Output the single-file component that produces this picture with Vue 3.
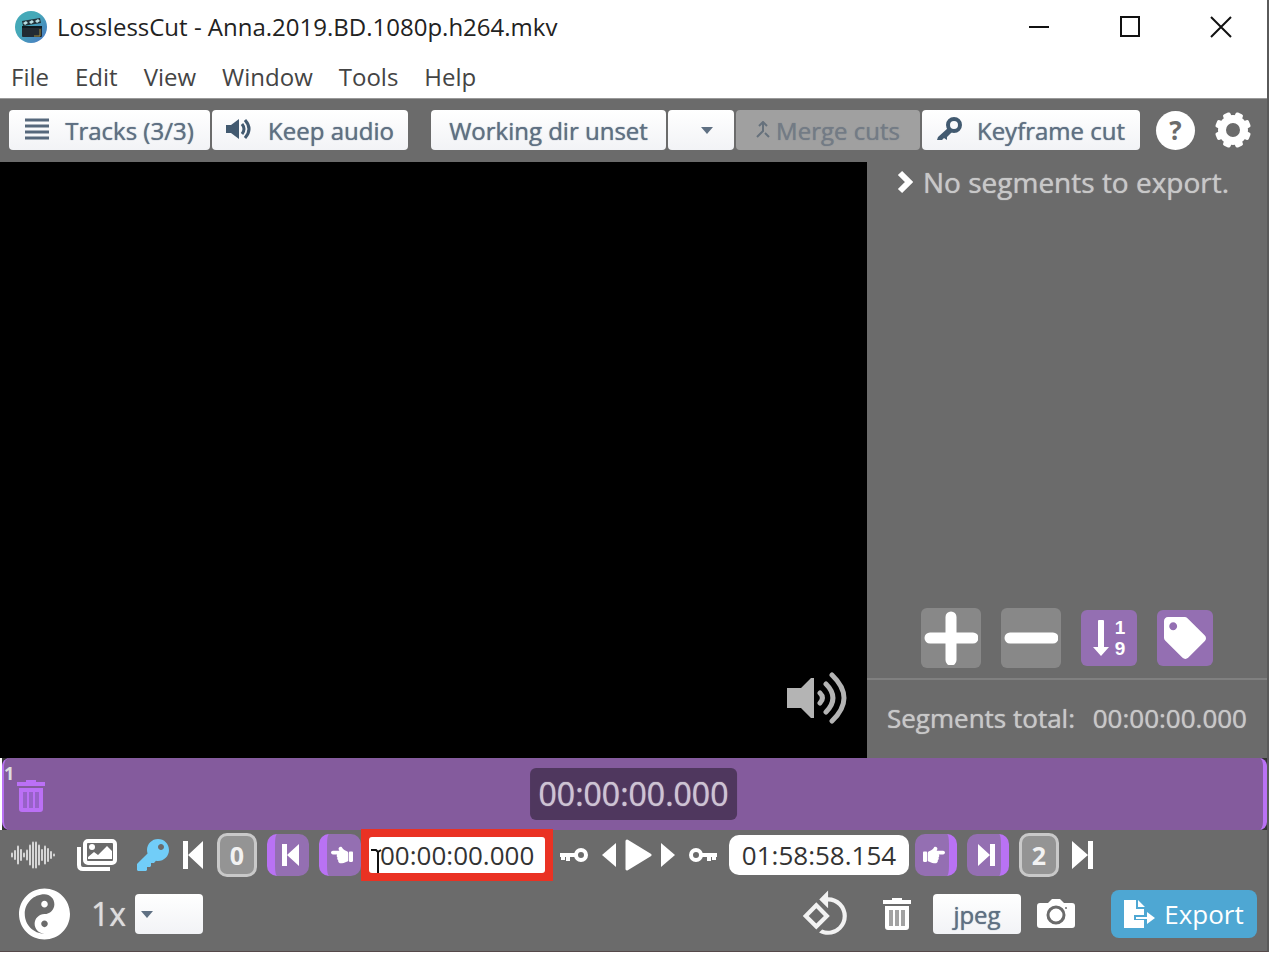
<script setup>
import { ref } from 'vue'

const menus = ['File', 'Edit', 'View', 'Window', 'Tools', 'Help']
const cutStart = ref('00:00:00.000')
const cutEnd = ref('01:58:58.154')
const outputDir = ref('')
const speed = ref('')

const waveBars = [
  [1, 5], [4, 10], [7, 19], [10, 12], [13, 5], [16, 11], [19, 21], [22, 27],
  [25, 27], [28, 21], [31, 12], [34, 19], [37, 14], [40, 8], [43, 3]
]
const teeth = [0, 45, 90, 135, 180, 225, 270, 315]
const hand =
  'M512 199.652c0 23.625-20.65 43.826-44.8 43.826h-99.851c16.34 17.048 18.346 49.766-6.299 70.944 14.288 22.829 2.147 53.017-16.45 62.315C353.574 425.878 322.654 448 272 448c-2.746 0-13.276-.203-16-.195-61.971.168-76.894-31.065-123.731-38.315C120.596 407.683 112 397.599 112 385.786V214.261l.002-.001c.011-18.366 10.607-35.889 28.464-43.845 28.886-12.994 95.413-49.038 107.534-77.323 7.797-18.194 21.384-29.084 40-29.092 34.222-.014 57.752 35.098 44.119 66.908-3.583 8.359-8.312 16.67-14.153 24.918H467.2c23.45 0 44.8 20.543 44.8 43.826zM96 200v192c0 13.255-10.745 24-24 24H24c-13.255 0-24-10.745-24-24V200c0-13.255 10.745-24 24-24h48c13.255 0 24 10.745 24 24z'
</script>

<template>
  <div class="desktop">
    <div class="window">
      <header class="titlebar">
        <svg class="logo" width="32" height="32" viewBox="0 0 32 32" aria-hidden="true">
          <defs>
            <linearGradient id="logo-fill" x1="0" y1="0" x2="1" y2="1">
              <stop offset="0.4" stop-color="#45a9b8" />
              <stop offset="1" stop-color="#4a74c4" />
            </linearGradient>
          </defs>
          <circle cx="16" cy="16" r="16" fill="url(#logo-fill)" />
          <rect x="7" y="15" width="20" height="11" rx="1" fill="#222b33" />
          <path d="M7 10l18-3 1 5-18 3z" fill="#22323a" />
          <path d="M8 12l3-2 2 2-3 2zM14 11l3-2 2 2-3 2zM20 10l3-2 2 2-3 2z" fill="#b9dfe4" />
          <path d="M7 16h20" stroke="#0f1a20" stroke-width="2" />
          <path d="M25 18v7h-6" stroke="#a08c3c" stroke-width="1" fill="none" />
        </svg>
        <h1>LosslessCut - Anna.2019.BD.1080p.h264.mkv</h1>
        <div class="caption">
          <button aria-label="Minimize">
            <svg width="22" height="22" viewBox="0 0 22 22"><path d="M1 11h20" /></svg>
          </button>
          <button aria-label="Maximize">
            <svg width="22" height="22" viewBox="0 0 22 22"><rect x="2" y="1" width="18" height="19" /></svg>
          </button>
          <button aria-label="Close">
            <svg width="22" height="22" viewBox="0 0 22 22"><path d="M1 1l20 20M21 1L1 21" /></svg>
          </button>
        </div>
      </header>

      <nav class="menubar">
        <button v-for="m in menus" :key="m">{{ m }}</button>
      </nav>

      <div class="topbar">
        <div class="joined">
          <button class="light tracks">
            <svg width="24" height="24" viewBox="0 0 24 24"><path d="M0 2h24M0 8h24M0 14h24M0 20h24" stroke="#56687c" stroke-width="3" /></svg>
            Tracks (3/3)
          </button>
          <button class="light audio">
            <svg width="26" height="22" viewBox="0 0 26 22">
              <path d="M0 6h5l8-6v20l-8-6H0z" fill="#425a70" />
              <path d="M16 5q4 5 0 10M19 1q8 9 0 18" fill="none" stroke="#425a70" stroke-width="3" />
            </svg>
            Keep audio
          </button>
        </div>
        <div class="joined stretch">
          <button class="light workdir">Working dir unset</button>
          <label class="picker dir">
            <select v-model="outputDir" class="light" aria-label="Working directory"><option value=""></option></select>
            <svg width="14" height="9" viewBox="0 0 14 9"><path d="M1 1h12L7 8z" /></svg>
          </label>
          <button class="light merge" disabled>
            <svg width="14" height="18" viewBox="0 0 14 18"><path d="M7 2v8L1 16M9 12l4 4M3 5l4-4 4 4" fill="none" stroke="#66717c" stroke-width="2" /></svg>
            Merge cuts
          </button>
          <button class="light keyframe">
            <svg width="26" height="26" viewBox="0 0 26 26">
              <circle cx="17" cy="8" r="6" fill="none" stroke="#425a70" stroke-width="4" />
              <path d="M11 11l4 4-5 5v3l-3-2-2 2H0l1-3z" fill="#425a70" />
            </svg>
            Keyframe cut
          </button>
        </div>
        <button class="help" aria-label="Help">?</button>
        <button class="bare gear" aria-label="Settings">
          <svg width="38" height="38" viewBox="0 0 38 38">
            <circle cx="19" cy="19" r="11" fill="none" stroke="#fff" stroke-width="8" />
            <rect v-for="t in teeth" :key="t" x="15" y="1" width="8" height="8" rx="2" fill="#fff" :transform="`rotate(${t + 22.5} 19 19)`" />
          </svg>
        </button>
      </div>

      <main class="stage">
        <section class="player" aria-label="Video">
          <button class="bare" aria-label="Volume">
            <svg width="62" height="52" viewBox="0 0 62 52">
              <path d="M1 16h14l10-10h3v40h-3L15 36H1z" fill="#b4b4b4" />
              <path d="M34 21q5 5 0 10M40 12q14 14 0 28M46 3q24 23 0 46" fill="none" stroke="#b4b4b4" stroke-width="5" stroke-linecap="round" />
            </svg>
          </button>
        </section>
        <aside class="sidebar">
          <div class="segments">
            <button class="bare" aria-label="Collapse segments">
              <svg width="16" height="24" viewBox="0 0 16 24"><path d="M3 3l9 9-9 9" fill="none" stroke="#fff" stroke-width="6" /></svg>
            </button>
            <span>No segments to export.</span>
          </div>
          <div class="segment-tools">
            <button class="tool big" aria-label="Add segment">
              <svg width="54" height="54" viewBox="0 0 54 54"><path d="M27 6v43M6 27h43" stroke="#fff" stroke-width="11" stroke-linecap="round" /></svg>
            </button>
            <button class="tool big" aria-label="Remove segment">
              <svg width="54" height="54" viewBox="0 0 54 54"><path d="M6 27h43" stroke="#fff" stroke-width="11" stroke-linecap="round" /></svg>
            </button>
            <button class="tool purple" aria-label="Change segment order">
              <svg width="16" height="36" viewBox="0 0 16 36"><path d="M5 1q0-1 1-1h4q1 0 1 1v26h5l-8 9-8-9h5z" fill="#fff" /></svg>
              <span class="digits"><b>1</b><b>9</b></span>
            </button>
            <button class="tool purple" aria-label="Label segment">
              <svg width="42" height="42" viewBox="0 0 512 512"><path fill="#fff" d="M0 252.118V48C0 21.49 21.49 0 48 0h204.118a48 48 0 0 1 33.941 14.059l211.882 211.882c18.745 18.745 18.745 49.137 0 67.882L293.823 497.941c-18.745 18.745-49.137 18.745-67.882 0L14.059 286.059A48 48 0 0 1 0 252.118zM112 64c-26.51 0-48 21.49-48 48s21.49 48 48 48 48-21.49 48-48-21.49-48-48-48z" /></svg>
            </button>
          </div>
          <div class="total"><span>Segments total:</span><span>00:00:00.000</span></div>
        </aside>
      </main>

      <section class="timeline" aria-label="Timeline">
        <div class="segment">
          <span class="number">1</span>
          <button class="bare" aria-label="Discard segment">
            <svg width="28" height="32" viewBox="0 0 28 32">
              <path fill="#bb70f6" d="M9 0h10v2h9v4H0V2h9zM2 8h24v21q0 3-3 3H5q-3 0-3-3z" />
              <path d="M8 12v16M14 12v16M20 12v16" stroke="#9862c8" stroke-width="4" />
            </svg>
          </button>
          <output class="now">00:00:00.000</output>
        </div>
      </section>

      <section class="controls">
        <div class="group wide">
          <button class="bare wave" aria-label="Show waveform">
            <svg width="44" height="30" viewBox="0 0 44 30">
              <rect v-for="b in waveBars" :key="b[0]" :x="b[0] - 1" :y="15 - b[1] / 2" width="2" :height="b[1]" rx="1" fill="#d6d6d6" />
            </svg>
          </button>
          <button class="bare" aria-label="Show thumbnails">
            <svg width="40" height="34" viewBox="0 0 40 34">
              <path d="M2 9v18q0 4 4 4h27" fill="none" stroke="#fff" stroke-width="4" />
              <rect x="8" y="3" width="30" height="22" rx="3" fill="none" stroke="#fff" stroke-width="4" />
              <circle cx="15" cy="9" r="3" fill="#fff" />
              <path d="M11 21v-2l6-5 4 3 9-9 5 5v8z" fill="#fff" />
            </svg>
          </button>
          <button class="bare" aria-label="Seek to keyframes">
            <svg width="32" height="32" viewBox="0 0 512 512"><path fill="#71cdf8" d="M512 176.001C512 273.203 433.202 352 336 352c-11.22 0-22.19-1.062-32.827-3.069l-24.012 27.014A23.999 23.999 0 0 1 261.223 384H224v40c0 13.255-10.745 24-24 24h-40v40c0 13.255-10.745 24-24 24H24c-13.255 0-24-10.745-24-24v-78.059c0-6.365 2.529-12.47 7.029-16.971l161.802-161.802C163.108 213.814 160 195.271 160 176 160 78.798 238.797.001 335.999 0 433.488-.001 512 78.511 512 176.001zM336 128c0 26.51 21.49 48 48 48s48-21.49 48-48-21.49-48-48-48-48 21.49-48 48z" /></svg>
          </button>
        </div>
        <div class="group mid">
          <button class="bare" aria-label="Jump to start">
            <svg width="20" height="28" viewBox="0 0 20 28"><path d="M0 0h5v28H0zM20 0v28L5 14z" fill="#fff" /></svg>
          </button>
          <div class="group">
            <button class="num">0</button>
            <button class="cut start" aria-label="Jump to cut start">
              <svg width="17" height="22" viewBox="0 0 17 22"><path d="M0 0h5v22H0zM17 0v22L5 11z" fill="#fff" /></svg>
            </button>
            <button class="cut start" aria-label="Set cut start">
              <svg width="22" height="22" viewBox="0 0 512 512"><path fill="#fff" transform="translate(512 0) scale(-1 1)" :d="hand" /></svg>
            </button>
          </div>
        </div>
        <div class="marked">
          <input v-model="cutStart" class="time" aria-label="Cut start" />
          <svg class="ibeam" width="12" height="26" viewBox="0 0 12 26" aria-hidden="true"><path d="M1 2h5l2 2 3-2M8 3v22" fill="none" stroke="#111" stroke-width="2" /></svg>
        </div>
        <div class="group mid transport">
          <button class="bare" aria-label="Previous keyframe">
            <svg width="29" height="16" viewBox="0 0 29 16"><circle cx="22" cy="8" r="5" fill="none" stroke="#fff" stroke-width="4" /><path d="M17 8H1M4 8v5M9 8v6" fill="none" stroke="#fff" stroke-width="4" /></svg>
          </button>
          <div class="group snug">
            <button class="bare" aria-label="Previous frame">
              <svg width="14" height="24" viewBox="0 0 14 24"><path d="M14 0v24L0 12z" fill="#fff" /></svg>
            </button>
            <button class="bare" aria-label="Play">
              <svg width="27" height="32" viewBox="0 0 27 32"><path d="M2 2l23 14L2 30z" fill="#fff" stroke="#fff" stroke-width="3" stroke-linejoin="round" /></svg>
            </button>
            <button class="bare" aria-label="Next frame">
              <svg width="14" height="24" viewBox="0 0 14 24"><path d="M0 0v24l14-12z" fill="#fff" /></svg>
            </button>
          </div>
          <button class="bare" aria-label="Next keyframe">
            <svg width="29" height="16" viewBox="0 0 29 16"><circle cx="7" cy="8" r="5" fill="none" stroke="#fff" stroke-width="4" /><path d="M12 8h16M25 8v5M20 8v6" fill="none" stroke="#fff" stroke-width="4" /></svg>
          </button>
        </div>
        <div class="group">
          <input v-model="cutEnd" class="time end" aria-label="Cut end" />
          <button class="cut stop first" aria-label="Set cut end">
            <svg width="22" height="22" viewBox="0 0 512 512"><path fill="#fff" :d="hand" /></svg>
          </button>
          <button class="cut stop" aria-label="Jump to cut end">
            <svg width="17" height="22" viewBox="0 0 17 22"><path d="M12 0h5v22h-5zM0 0v22l12-11z" fill="#fff" /></svg>
          </button>
          <button class="num">2</button>
          <button class="bare last" aria-label="Jump to end">
            <svg width="21" height="28" viewBox="0 0 21 28"><path d="M16 0h5v28h-5zM0 0v28l16-14z" fill="#fff" /></svg>
          </button>
        </div>
      </section>

      <footer class="bottom">
        <button class="bare" aria-label="Toggle mode">
          <svg width="51" height="52" viewBox="0 8 496 496"><path fill="#fff" d="M248 8C111.03 8 0 119.03 0 256s111.03 248 248 248 248-111.03 248-248S384.97 8 248 8zm0 376c-17.67 0-32-14.33-32-32s14.33-32 32-32 32 14.33 32 32-14.33 32-32 32zm0-128c-53.02 0-96 42.98-96 96s42.98 96 96 96c-106.04 0-192-85.96-192-192S141.96 64 248 64c53.02 0 96 42.98 96 96s-42.98 96-96 96zm0-128c-17.67 0-32 14.33-32 32s14.33 32 32 32 32-14.33 32-32-14.33-32-32-32z" /></svg>
        </button>
        <label class="speed" for="speed">1x</label>
        <div class="picker rate">
          <select id="speed" v-model="speed" class="light"><option value=""></option></select>
          <svg width="14" height="9" viewBox="0 0 14 9"><path d="M1 1h12L7 8z" /></svg>
        </div>
        <div class="actions">
          <button class="bare" aria-label="Rotate">
            <svg width="50" height="50" viewBox="0 0 24 24"><path fill="#f2f2f2" d="M7.34 6.41L.86 12.9l6.49 6.48 6.49-6.48-6.5-6.49zM3.69 12.9l3.66-3.66L11 12.9l-3.66 3.66-3.65-3.66zm15.67-6.26A8.95 8.95 0 0 0 13 4V.76L8.76 5 13 9.24V6c1.79 0 3.58.68 4.95 2.05a7.007 7.007 0 0 1 0 9.9 6.973 6.973 0 0 1-7.79 1.44l-1.49 1.49C10.02 21.62 11.51 22 13 22c2.3 0 4.61-.88 6.36-2.64a8.98 8.98 0 0 0 0-12.72z" /></svg>
          </button>
          <button class="bare trash" aria-label="Delete source">
            <svg width="28" height="32" viewBox="0 0 28 32">
              <path fill="#fff" d="M9 0h10v2h9v4H0V2h9zM2 8h24v21q0 3-3 3H5q-3 0-3-3z" />
              <path d="M8 12v16M14 12v16M20 12v16" stroke="#a2a2a2" stroke-width="4" />
            </svg>
          </button>
          <button class="light format">jpeg</button>
          <button class="bare" aria-label="Capture frame">
            <svg width="38" height="30" viewBox="0 0 38 30">
              <path fill="#fff" d="M3 4h8l4-4h8l4 4h8q3 0 3 3v19q0 3-3 3H3q-3 0-3-3V7q0-3 3-3z" />
              <circle cx="19" cy="16" r="8" fill="none" stroke="#6b6b6b" stroke-width="3" />
              <circle cx="29" cy="9" r="1" fill="#6b6b6b" />
            </svg>
          </button>
          <button class="export">
            <svg width="31" height="28" viewBox="0 0 31 28">
              <path fill="#fff" d="M0 0h12v9h8v6H10v5h10v8H0zM14 0l7 7h-7zM12 17h11v-5l8 6-8 6v-5H12z" />
            </svg>
            Export
          </button>
        </div>
      </footer>
    </div>
  </div>
</template>

<style>
body { background: #fff; }
</style>

<style scoped>
.desktop {
  box-sizing: border-box;
  height: 100vh;
  padding: 0 3px 6px 0;
  font-family: "Open Sans", "Noto Sans", sans-serif;
}
.window {
  display: flex;
  flex-direction: column;
  height: 100%;
  box-sizing: border-box;
  border-right: 2px solid #5a5a5a;
  border-bottom: 1px solid #55494a;
  background: #6b6b6b;
}
button, input, select { font: inherit; margin: 0; }
button {
  display: flex;
  align-items: center;
  justify-content: center;
  border: 0;
  padding: 0;
  background: none;
}
svg { display: block; flex: none; }

.titlebar {
  display: flex;
  align-items: center;
  height: 53px;
  padding: 0 1px 0 15px;
  background: #fff;
}
h1 {
  flex: 1;
  margin: 0 0 0 10px;
  font-size: 24px;
  font-weight: 400;
  color: #222;
  white-space: nowrap;
}
.caption { display: flex; }
.caption button { width: 91px; height: 53px; }
.caption svg { fill: none; stroke: #111; stroke-width: 2; }

.menubar {
  display: flex;
  gap: 26px;
  height: 45px;
  padding: 2px 11px 0;
  box-sizing: border-box;
  background: #fff;
  font-size: 24px;
  color: #444;
}
.menubar button { color: inherit; }

.topbar {
  display: flex;
  align-items: center;
  gap: 16px;
  height: 64px;
  padding: 0 15px 1px 9px;
  border-top: 1px solid #999;
  box-sizing: border-box;
}
.joined { display: flex; gap: 2px; }
.stretch { margin-left: auto; }
.light {
  height: 40px;
  border-radius: 4px;
  background: linear-gradient(#fff, #f2f3f6);
  color: #5f7083;
  font-size: 24px;
  font-weight: 500;
  text-shadow: 0 0 1px currentColor;
  white-space: nowrap;
}
.tracks { width: 201px; gap: 16px; }
.audio { width: 196px; gap: 16px; }
.workdir { width: 235px; }
.merge { width: 184px; gap: 6px; background: #a0a0a0; color: #737b85; }
.keyframe { width: 218px; gap: 14px; }
.picker { position: relative; display: block; }
.picker select { appearance: none; width: 100%; border: 0; display: block; }
.picker svg { position: absolute; top: 16px; fill: #5f7083; }
.dir { width: 66px; }
.dir svg { left: 32px; }
.rate { width: 68px; }
.rate svg { left: 5px; }
.help {
  width: 39px;
  height: 39px;
  border-radius: 50%;
  background: #fff;
  color: #6b6b6b;
  font-size: 26px;
  font-weight: 700;
}
.gear { margin-left: 3px; }

.stage { display: flex; flex: 1; min-height: 0; }
.player {
  flex: 1;
  display: flex;
  align-items: flex-end;
  justify-content: flex-end;
  padding: 0 19px 34px 0;
  background: #000;
}
.sidebar { display: flex; flex-direction: column; width: 400px; color: #c8c8c8; }
.segments {
  display: flex;
  align-items: center;
  gap: 10px;
  height: 40px;
  padding-left: 30px;
  font-size: 28px;
  text-shadow: 0 0 1px currentColor;
  white-space: nowrap;
}
.segment-tools {
  display: flex;
  align-items: center;
  justify-content: center;
  gap: 20px;
  margin-top: auto;
  padding-bottom: 10px;
}
.tool { width: 56px; height: 56px; border-radius: 6px; background: #888; }
.big { width: 60px; height: 60px; }
.purple { background: #946fb2; }
.digits {
  display: flex;
  flex-direction: column;
  margin-left: 6px;
  color: #fff;
  font-family: "Liberation Sans", sans-serif;
  font-size: 19px;
  line-height: 21px;
}
.total {
  display: flex;
  align-items: center;
  justify-content: space-between;
  height: 80px;
  padding: 0 20px 2px;
  border-top: 2px solid #808080;
  box-sizing: border-box;
  font-size: 26px;
  text-shadow: 0 0 1px currentColor;
  white-space: nowrap;
}

.timeline { background: #333; border-left: 2px solid #fff; }
.segment {
  position: relative;
  display: flex;
  align-items: center;
  height: 72px;
  padding-left: 13px;
  box-sizing: border-box;
  border: solid #b972f4;
  border-width: 0 4px 0 2px;
  border-radius: 8px;
  background: #845b9d;
}
.segment .bare { margin-top: 4px; }
.number {
  position: absolute;
  top: 4px;
  left: 0;
  color: #ddd;
  font-size: 18px;
  line-height: 22px;
  font-weight: 700;
}
.now {
  position: absolute;
  top: 50%;
  left: 50%;
  transform: translate(-50%, -50%);
  padding: 4px 9px;
  border-radius: 6px;
  background: #4f375e;
  color: #cdc3d3;
  font-size: 32px;
  line-height: 44px;
  text-shadow: 0 0 1px currentColor;
}

.controls { display: flex; align-items: center; height: 50px; padding-left: 11px; }
.group { display: flex; align-items: center; gap: 10px; }
.wide { gap: 20px; margin-right: 14px; }
.wave { margin-right: 2px; }
.mid { gap: 14px; }
.snug { gap: 9px; }
.transport { margin: 0 11px 0 6px; }
.num {
  width: 40px;
  height: 44px;
  border: 3px solid #c9c9c9;
  border-radius: 10px;
  background: #949494;
  color: #f2f2f2;
  font-size: 25px;
  font-weight: 700;
}
.cut { width: 42px; height: 42px; border-radius: 10px; background: #946fb2; }
.start { padding-right: 4px; border-left: 8px solid #b972f4; }
.stop { padding-left: 4px; border-right: 8px solid #b972f4; }
.first { margin-left: -4px; }
.last { margin-left: 3px; }
.marked { position: relative; margin: -2px 0; padding: 8px; background: #ea3223; }
.time {
  display: block;
  width: 176px;
  height: 36px;
  box-sizing: border-box;
  border: 0;
  border-radius: 3px;
  padding: 0 0 0 11px;
  background: #fff;
  color: #333;
  font-size: 26px;
}
.end { width: 180px; height: 40px; border-radius: 10px; padding: 0; text-align: center; }
.ibeam { position: absolute; left: 9px; top: 19px; }

.bottom {
  display: flex;
  align-items: center;
  height: 71px;
  padding: 0 10px 3px 19px;
  box-sizing: border-box;
}
.speed { margin: 0 9px 0 21px; color: #ddd; font-size: 32px; line-height: 40px; text-shadow: 0 0 1px currentColor; }
.actions { display: flex; align-items: center; gap: 16px; margin-left: auto; }
.trash { margin: 0 6px 0 16px; }
.format { width: 88px; }
.export {
  gap: 9px;
  width: 146px;
  height: 48px;
  margin-left: 20px;
  border-radius: 8px;
  background: #4ea7d3;
  color: #fff;
  font-size: 26px;
}
</style>
